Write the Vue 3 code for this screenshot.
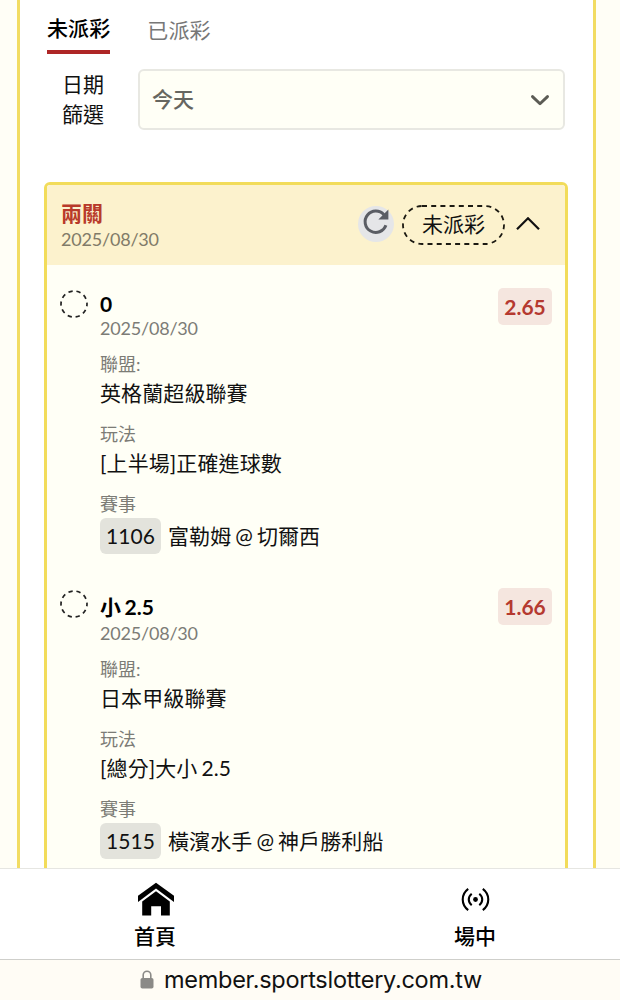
<template>
  <div class="page">
    <main class="content">
      <section class="panel">
        <!-- 派彩狀態分頁 -->
        <div class="tabs">
          <button
            v-for="tab in tabs"
            :key="tab"
            class="tab"
            :class="{ active: tab === currentTab }"
            @click="currentTab = tab"
          >{{ tab }}</button>
        </div>

        <!-- 日期篩選 -->
        <div class="filter">
          <label class="filter-label">日期篩選</label>
          <div class="select">
            <span>今天</span>
            <svg width="20" height="12" viewBox="0 0 20 12" fill="none">
              <path d="M2.5 2.6 L10 9.8 L17.5 2.6" stroke="#5c5c55" stroke-width="2.9" stroke-linecap="round" stroke-linejoin="round" />
            </svg>
          </div>
        </div>

        <!-- 投注單 -->
        <div class="card">
          <div class="card-header">
            <div class="card-title">
              <h3>兩關</h3>
              <span class="date">2025/08/30</span>
            </div>
            <button class="refresh">
              <svg width="36" height="36" viewBox="0 0 36 36" fill="none">
                <path d="M27.9 19.3 A10.7 10.7 0 1 1 25.9 8.7" stroke="#5a5d64" stroke-width="3" />
                <path d="M30.4 3.4 V13.6 H20.4 Z" fill="#5a5d64" />
              </svg>
            </button>
            <span class="status">
              <svg class="status-line" width="103" height="40" viewBox="0 0 103 40" fill="none">
                <rect x="1" y="1" width="101" height="38" rx="19" stroke="#1c1a12" stroke-width="1.8" stroke-dasharray="5 4.2" />
              </svg>
              未派彩
            </span>
            <button class="toggle" @click="opened = !opened">
              <svg width="26" height="16" viewBox="0 0 26 16" fill="none" :class="{ closed: !opened }">
                <path d="M2 12.3 L13 1.3 L24 12.3" stroke="#111" stroke-width="2.2" />
              </svg>
            </button>
          </div>

          <div v-if="opened" class="card-body">
            <div v-for="leg in legs" :key="leg.no" class="leg">
              <svg class="pending" width="28" height="28" viewBox="0 0 28 28" fill="none">
                <circle cx="14" cy="14" r="13" stroke="#222" stroke-width="1.7" stroke-dasharray="4.3 3.87" stroke-dashoffset="2" />
              </svg>
              <div class="leg-info">
                <h4>{{ leg.pick }}</h4>
                <div class="date">{{ leg.date }}</div>
                <dl>
                  <dt>聯盟:</dt>
                  <dd>{{ leg.league }}</dd>
                  <dt>玩法</dt>
                  <dd>{{ leg.market }}</dd>
                  <dt>賽事</dt>
                  <dd class="match"><span class="no">{{ leg.no }}</span>{{ leg.match }}</dd>
                </dl>
              </div>
              <span class="odds">{{ leg.odds }}</span>
            </div>
          </div>
        </div>
      </section>
    </main>

    <!-- 底部選單 -->
    <nav class="nav">
      <a class="nav-item">
        <svg width="38" height="34" viewBox="0 0 38 34">
          <path d="M20 0.7 L38 13.8 V20 L20 6.6 L2 20 V13.8 Z" />
          <path d="M20 9.2 L33.8 19.4 V33.5 H25 V24.3 H15.2 V33.5 H6.2 V19.4 Z" />
        </svg>
        <span>首頁</span>
      </a>
      <a class="nav-item">
        <svg width="30" height="34" viewBox="0 0 30 34" fill="none" stroke="#000" stroke-width="2.1">
          <circle cx="15.5" cy="17.5" r="2.4" fill="#000" stroke="none" />
          <path d="M11.7 11.8 C7.8 15 7.8 20 11.7 23.2 M19.3 11.8 C23.2 15 23.2 20 19.3 23.2" />
          <path d="M8.2 6.9 C0.9 12.5 0.9 22.5 8.2 28.1 M22.8 6.9 C30.1 12.5 30.1 22.5 22.8 28.1" />
        </svg>
        <span>場中</span>
      </a>
    </nav>

    <footer class="address">
      <svg width="14" height="19" viewBox="0 0 14 19" fill="none">
        <rect x="0.5" y="8" width="13" height="10.6" rx="1.8" fill="#8b8a87" />
        <path d="M3.2 8.5 V5 A3.8 3.8 0 0 1 10.8 5 V8.5" stroke="#8b8a87" stroke-width="1.6" />
      </svg>
      <span>member.sportslottery.com.tw</span>
    </footer>
  </div>
</template>

<script setup>
import { ref } from 'vue'

const tabs = ['未派彩', '已派彩']
const currentTab = ref('未派彩')
const opened = ref(true)

const legs = [
  {
    no: '1106',
    pick: '0',
    date: '2025/08/30',
    league: '英格蘭超級聯賽',
    market: '[上半場]正確進球數',
    match: '富勒姆 @ 切爾西',
    odds: '2.65'
  },
  {
    no: '1515',
    pick: '小 2.5',
    date: '2025/08/30',
    league: '日本甲級聯賽',
    market: '[總分]大小 2.5',
    match: '橫濱水手 @ 神戶勝利船',
    odds: '1.66'
  }
]
</script>

<style>
body {
  background: #fffef6;
}
</style>

<style scoped>
.page {
  display: flex;
  flex-direction: column;
  height: 1000px;
  overflow: hidden;
  box-sizing: border-box;
  font-family: Lato, 'Noto Sans CJK TC', sans-serif;
  font-size: 21px;
  word-spacing: -1.5px;
  color: #111;
  background: #fffef6;
}

button {
  padding: 0;
  border: none;
  background: none;
  font: inherit;
  color: inherit;
}

svg {
  display: block;
  flex: none;
}

h3,
h4,
dl,
dd {
  margin: 0;
}

.content {
  height: 868px;
  overflow: hidden;
  padding: 0 24px 0 17px;
}

.panel {
  min-height: 900px;
  padding: 0 25px 0 24px;
  border: solid #f2dc62;
  border-width: 0 3px;
  background: #fff;
}

/* 分頁 */
.tabs {
  display: flex;
  gap: 37px;
  height: 54px;
  padding-left: 3px;
}

.tab {
  box-sizing: border-box;
  height: 54px;
  padding-top: 9px;
  border-bottom: 4px solid transparent;
  line-height: 41px;
  letter-spacing: 0.1px;
  color: #777;
}

.tab.active {
  padding-top: 7px;
  padding-bottom: 2px;
  border-bottom-color: #ae2626;
  font-weight: 500;
  color: #000;
}

/* 日期篩選 */
.filter {
  display: flex;
  align-items: center;
  height: 61px;
  margin-top: 15px;
  padding-right: 3px;
}

.filter-label {
  width: 42px;
  margin: -2px 34px 0 18px;
  line-height: 30px;
}

.select {
  display: flex;
  flex: 1;
  align-items: center;
  justify-content: space-between;
  box-sizing: border-box;
  height: 61px;
  padding: 0 13px 0 12px;
  border: 2px solid #e8e8e2;
  border-radius: 6px;
  font-weight: 500;
  color: #666660;
  background: #fffff6;
}

.select span {
  margin-top: -3px;
}

/* 投注單 */
.card {
  box-sizing: border-box;
  min-height: 760px;
  margin-top: 52px;
  border: 3px solid #f2dc5a;
  border-radius: 6px;
  background: #fffff6;
}

.card-header {
  display: flex;
  align-items: center;
  height: 80px;
  padding: 0 24px 0 14px;
  border-radius: 3px 3px 0 0;
  background: #fcf2cd;
}

.card-title {
  flex: 1;
}

.card-title h3 {
  margin-top: -2px;
  font-size: 21px;
  font-weight: 700;
  line-height: 30px;
  color: #b83a2a;
}

.card-title .date {
  display: block;
  color: #817b68;
}

.date {
  font-size: 18px;
  letter-spacing: -0.2px;
  color: #7c7c76;
}

.refresh {
  width: 36px;
  height: 36px;
  margin: -3px 8px 0 0;
  border-radius: 50%;
  background: #e5e6e8;
}

.status {
  position: relative;
  width: 103px;
  height: 40px;
  margin-right: 10px;
  line-height: 38px;
  text-align: center;
}

.status-line {
  position: absolute;
  top: 0;
  left: 0;
}

.closed {
  transform: rotate(180deg);
}

.card-body {
  padding: 23px 13px 0 14px;
}

.leg {
  display: flex;
  align-items: flex-start;
  height: 300px;
}

.pending {
  margin: 2px 12px 0 -1px;
}

.leg-info {
  flex: 1;
  padding-top: 3px;
}

.leg-info h4 {
  font-size: 21px;
  font-weight: 700;
  color: #000;
}

.leg-info .date {
  padding-top: 1px;
}

dt {
  margin-top: 12px;
  font-size: 18px;
  line-height: 26px;
  color: #7c7c76;
}

dd {
  line-height: 32px;
  letter-spacing: 0.1px;
}

.match {
  display: flex;
  align-items: center;
  margin-top: 1px;
  line-height: 36px;
}

.no {
  width: 61px;
  height: 36px;
  margin-right: 7px;
  border-radius: 6px;
  text-align: center;
  background: #e3e3dc;
}

.odds {
  width: 54px;
  height: 37px;
  border-radius: 5px;
  font-size: 21px;
  font-weight: 700;
  line-height: 37px;
  text-align: center;
  color: #b5392f;
  background: #f5e6df;
}

/* 底部選單 */
.nav {
  display: flex;
  box-sizing: border-box;
  height: 91px;
  border-top: 1px solid #e6e6e2;
  background: #fff;
}

.nav-item {
  display: flex;
  flex: none;
  flex-direction: column;
  align-items: center;
  box-sizing: border-box;
  width: 310px;
  padding: 13px 0 0;
  font-weight: 500;
  color: #000;
}

.nav-item + .nav-item {
  padding-left: 20px;
}

.nav-item span {
  margin-top: 5px;
  line-height: 30px;
}

.address {
  display: flex;
  align-items: center;
  justify-content: center;
  gap: 10px;
  box-sizing: border-box;
  height: 41px;
  padding: 0 0 2px 2px;
  border-top: 1px solid #cfcfcb;
  font-family: Inter, sans-serif;
  font-size: 23.5px;
  letter-spacing: -0.28px;
  color: #111;
  background: #fffcf5;
}
</style>
